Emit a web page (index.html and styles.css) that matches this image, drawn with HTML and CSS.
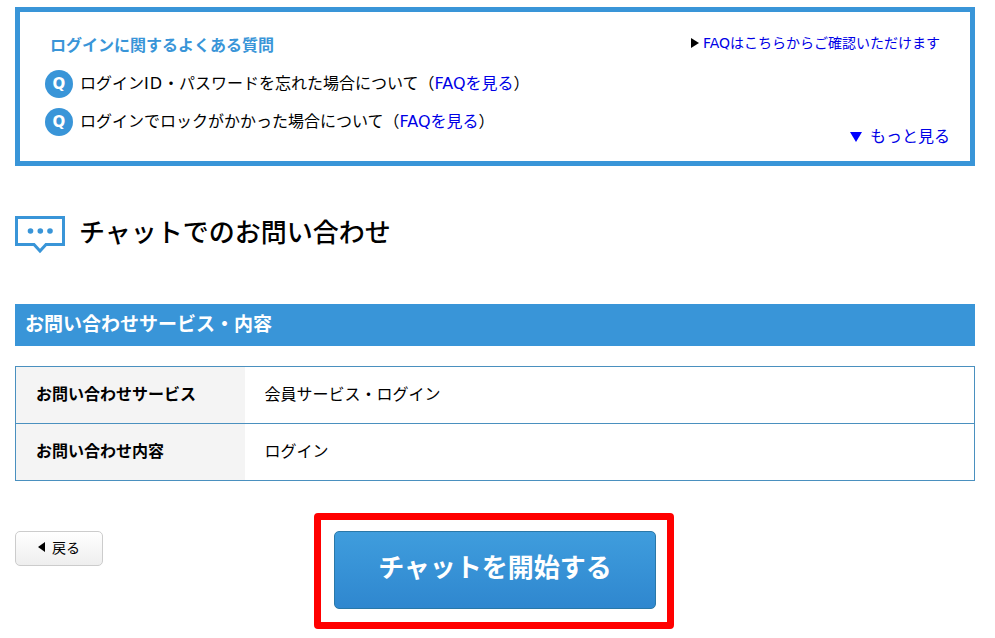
FILE: index.html
```html
<!DOCTYPE html>
<html lang="ja">
<head>
  <meta charset="UTF-8">
  <meta name="viewport" content="width=device-width, initial-scale=1.0">
  <title>チャットでのお問い合わせ</title>
  <link rel="stylesheet" href="styles.css">
</head>
<body>
  <div class="page">
    <div class="faq-box">
      <div class="faq-head">
        <h2>ログインに関するよくある質問</h2>
        <a class="faq-all" href="#">FAQはこちらからご確認いただけます</a>
      </div>
      <ul class="faq-list">
        <li><span class="q-mark">Q</span>ログイン<span class="wide-latin">ID</span>・パスワードを忘れた場合について（<a href="#">FAQを見る</a>）</li>
        <li><span class="q-mark">Q</span>ログインでロックがかかった場合について（<a href="#">FAQを見る</a>）</li>
      </ul>
      <a class="faq-more" href="#">もっと見る</a>
    </div>

    <div class="chat-title">
      <svg class="chat-icon" width="50" height="38" viewBox="0 0 50 38">
        <path d="M1.5 1.5H48.5V28.5H31L25 35L19 28.5H1.5Z" fill="#fff" stroke="#3995d8" stroke-width="3"/>
        <circle cx="15.5" cy="15" r="2.8" fill="#3995d8"/>
        <circle cx="25.3" cy="15" r="2.8" fill="#3995d8"/>
        <circle cx="35" cy="15" r="2.8" fill="#3995d8"/>
      </svg>
      <h1>チャットでのお問い合わせ</h1>
    </div>

    <h3 class="section-bar">お問い合わせサービス・内容</h3>

    <table class="info-table">
      <tr>
        <th>お問い合わせサービス</th>
        <td>会員サービス・ログイン</td>
      </tr>
      <tr>
        <th>お問い合わせ内容</th>
        <td>ログイン</td>
      </tr>
    </table>

    <div class="actions">
      <a class="back-btn" href="#"><span class="back-arrow"></span>戻る</a>
      <div class="start-frame">
        <button class="start-btn" type="button">チャットを開始する</button>
      </div>
    </div>
  </div>
</body>
</html>
```

FILE: styles.css
```css
* {
  box-sizing: border-box;
}

body {
  margin: 0;
  background-color: #fff;
  color: #000;
  font-family: "DejaVu Sans", "Noto Sans CJK JP", sans-serif;
  font-size: 16px;
}

a {
  color: #0000e6;
  text-decoration: none;
}

.page {
  width: 960px;
  margin-left: 15px;
  padding-top: 7px;
}

/* FAQ */
.faq-box {
  display: flex;
  flex-direction: column;
  height: 159px;
  padding: 22px 20px 0 25px;
  border: 5px solid #3995d8;
}

.faq-head {
  display: flex;
  justify-content: space-between;
  align-items: flex-start;
  padding-left: 5px;
  padding-right: 10px;
}

.faq-head h2 {
  margin: 0;
  color: #3995d8;
  font-size: 16px;
  line-height: 24px;
}

.faq-all {
  position: relative;
  top: -3px;
  font-size: 14px;
  line-height: 24px;
}

.faq-all::before {
  content: "";
  display: inline-block;
  margin-right: 4px;
  border-left: 8px solid #000;
  border-top: 5px solid transparent;
  border-bottom: 5px solid transparent;
}

.faq-list {
  margin: 12px 0 0;
  padding: 0;
  list-style: none;
}

.faq-list li {
  display: flex;
  align-items: center;
  height: 28px;
  margin-bottom: 10px;
  line-height: 28px;
  white-space: nowrap;
}

.wide-latin {
  letter-spacing: 1px;
}

.q-mark {
  flex: none;
  width: 28px;
  height: 28px;
  margin-right: 7px;
  border-radius: 50%;
  background-color: #3995d8;
  color: #fff;
  font-size: 15px;
  font-weight: bold;
  line-height: 28px;
  text-align: center;
}

.faq-more {
  align-self: flex-end;
  margin-top: -21px;
  line-height: 24px;
}

.faq-more::before {
  content: "";
  display: inline-block;
  margin-right: 8px;
  border-top: 10px solid #0000ff;
  border-left: 6px solid transparent;
  border-right: 6px solid transparent;
}

/* title */
.chat-title {
  display: flex;
  align-items: center;
  gap: 14px;
  height: 38px;
  margin-top: 50px;
}

.chat-title h1 {
  margin: 0;
  font-size: 26px;
  font-weight: 500;
  line-height: 34px;
  position: relative;
  top: -2px;
}

.section-bar {
  height: 42px;
  margin: 50px 0 20px;
  padding-left: 10px;
  background-color: #3995d8;
  color: #fff;
  font-size: 19px;
  line-height: 40px;
}

/* table */
.info-table {
  width: 100%;
  border-collapse: collapse;
  border: 1px solid #4a90bf;
}

.info-table tr {
  height: 57px;
  border-bottom: 1px solid #4a90bf;
}

.info-table th {
  width: 229px;
  padding: 0 0 1px 20px;
  background-color: #f4f4f4;
  font-size: 16px;
  line-height: 24px;
  text-align: left;
}

.info-table td {
  padding: 0 0 1px 20px;
  font-size: 16px;
  line-height: 24px;
}

/* buttons */
.actions {
  display: grid;
  grid-template-columns: 299px 360px;
  align-items: start;
  margin-top: 32px;
}

.back-btn {
  display: flex;
  align-items: center;
  justify-content: center;
  width: 88px;
  height: 35px;
  margin-top: 18px;
  padding-bottom: 3px;
  border: 1px solid #ccc;
  border-radius: 5px;
  background: linear-gradient(#fff, #eee);
  color: #000;
  font-size: 14px;
}

.back-arrow {
  margin-right: 7px;
  border-right: 7px solid #000;
  border-top: 5px solid transparent;
  border-bottom: 5px solid transparent;
}

.start-frame {
  grid-column: 2;
  width: 360px;
  height: 116px;
  padding: 11px 11px 0 13px;
  border: 7px solid #f00;
  border-radius: 4px;
}

.start-btn {
  display: block;
  width: 322px;
  height: 78px;
  padding-bottom: 11px;
  border: 1px solid #2a78a8;
  border-radius: 5px;
  background: linear-gradient(#3f9ddd, #2f87cf);
  color: #fff;
  font-family: inherit;
  font-size: 26px;
  font-weight: bold;
}
```
